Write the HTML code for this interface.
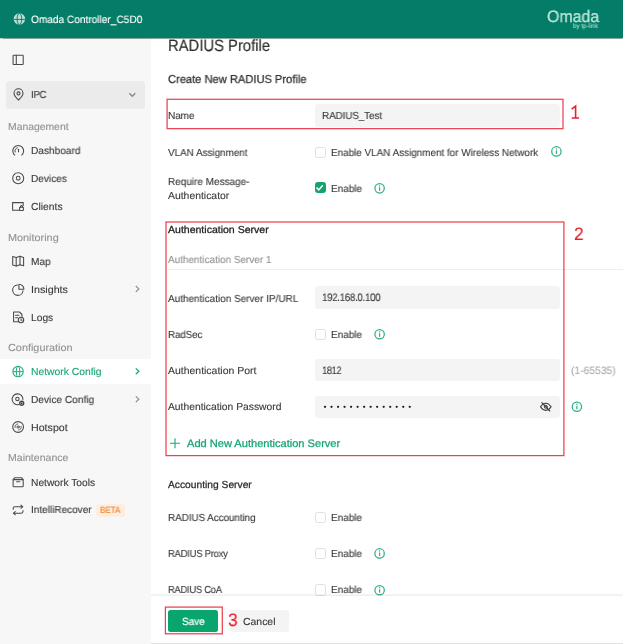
<!DOCTYPE html>
<html>
<head>
<meta charset="utf-8">
<title>RADIUS Profile</title>
<style>
*{box-sizing:border-box;margin:0;padding:0}
html,body{width:623px;height:644px;overflow:hidden;background:#fff}
body{font-family:"Liberation Sans",sans-serif;color:#333;position:relative;font-size:10.5px}
.abs{position:absolute}
.t{text-rendering:geometricPrecision;-webkit-text-stroke:0.12px currentColor;position:absolute;white-space:nowrap;line-height:14px;height:14px;transform-origin:0 50%;will-change:transform}
#hdr{position:absolute;left:0;top:0;width:623px;height:38px;background:#037d67;z-index:2;box-shadow:0 0.5px 1px rgba(0,60,45,.45)}
#side{position:absolute;left:0;top:38px;width:151px;height:606px;background:#f7f7f7}
.inp{position:absolute;left:314.7px;width:245px;height:22.6px;background:#f4f4f4;border-radius:3px}
.cb{position:absolute;left:314.500px;width:11.200px;height:11.200px;border:1px solid #e0e0e0;border-radius:2.5px;background:#fff}
svg{position:absolute;overflow:visible}
.ic{fill:none;stroke:#4a4a4a;stroke-width:1.07;stroke-linecap:round;stroke-linejoin:round}
.info{fill:none;stroke:#2db182;stroke-width:1.25}
</style>
</head>
<body>
<!-- header -->
<div id="hdr"></div>
<svg style="left:0;top:0;z-index:3" width="623" height="39" viewBox="0 0 623 39">
  <!-- globe -->
  <circle cx="19.400" cy="19" r="5.750" fill="#b7e0d3"/>
  <g fill="none" stroke="#037d67" stroke-width="0.900">
    <ellipse cx="19.400" cy="19" rx="2.300" ry="5.600"/>
    <path d="M13.600 19.450H25.200" stroke-width="0.900"/>
  </g>
</svg>
<!-- logo -->
<div class="t" style="z-index:3;left:546.600px;top:6.800px;color:#bfe4d8;font-size:16.600px;line-height:20px;height:20px;transform:scaleX(0.957);-webkit-text-stroke:0.300px #bfe4d8">Omada</div>
<div class="t" style="z-index:3;left:572.8px;top:22.6px;color:#a9dacb;font-size:6.4px;line-height:8px;height:8px;transform:scaleX(0.97)">by tp-link</div>

<!-- sidebar -->
<div id="side"></div>
<div class="abs" style="left:6.100px;top:80.900px;width:139.200px;height:27.700px;background:#ebebeb;border-radius:3.500px"></div>
<div class="abs" style="left:0;top:359px;width:151px;height:24.7px;background:#fff"></div>

<svg style="left:0;top:0" width="151" height="644" viewBox="0 0 151 644">
  <!-- toggle -->
  <g class="ic"><rect x="13.100" y="55.200" width="10.100" height="9.300" rx="0.600"/><path d="M16.300 55.200V64.500"/></g>
  <!-- pin -->
  <g class="ic"><path d="M18.5 100C15.6 97.3 14 95.2 14 93.3a4.5 4.5 0 0 1 9 0c0 1.900-1.600 4-4.500 6.700z"/><circle cx="18.500" cy="93.400" r="1.500"/></g>
  <!-- chevron down -->
  <path d="M129.300 93.300L132.300 96.300L135.300 93.300" fill="none" stroke="#858585" stroke-width="1.250"/>
  <!-- dashboard -->
  <g class="ic"><path d="M14.730 155.040A5.400 5.400 0 1 1 21.670 155.040"/><path d="M15.100 152.030A3.300 3.300 0 0 1 17.350 147.710" stroke-width="1"/><path d="M18.500 151.800V149.300" stroke-width="1.100"/></g>
  <!-- devices -->
  <g class="ic"><circle cx="18.200" cy="178.200" r="5.500"/><circle cx="18.200" cy="178.200" r="1.900"/></g>
  <!-- clients -->
  <g class="ic"><path d="M19.500 210.200H12.600V202.600H23.200V205.500"/><rect x="19.600" y="207.300" width="3.800" height="3.200" rx="0.400"/><path d="M20.500 207.300V206.600a1 1 0 0 1 2 0V207.300"/></g>
  <!-- map -->
  <g class="ic"><path d="M12.700 256.500L16.200 257.500L20 256.300L23.600 257.400V265.800L20 264.700L16.200 265.900L12.700 264.900Z"/><path d="M16.200 257.500V265.900M20 256.300V264.700"/></g>
  <!-- insights -->
  <g class="ic"><path d="M17.300 285A5.200 5.200 0 1 0 23 290.700"/><path d="M18.900 284.200V289.200H23.900A5 5 0 0 0 18.900 284.200Z"/></g>
  <!-- chevron right -->
  <path d="M135.800 286L138.800 288.900L135.800 291.800" fill="none" stroke="#8a8a8a" stroke-width="1.150"/>
  <!-- logs -->
  <g class="ic"><path d="M18 321.800H13.600V312H19.500L22 314.500V316.500"/><path d="M15.600 315.300H19M15.600 317.800H17.500"/><circle cx="21" cy="320" r="2.700"/><path d="M21 318.800V320.200H22"/></g>
  <!-- network config -->
  <g fill="none" stroke="#25ae7e" stroke-width="1.100"><circle cx="18.050" cy="371.600" r="5.200"/><ellipse cx="18.050" cy="371.600" rx="1.800" ry="5.200" stroke-width="1"/><path d="M12.900 371.600H23.200" stroke-width="1"/></g>
  <path d="M135.800 368.400L138.800 371.300L135.800 374.200" fill="none" stroke="#1aa877" stroke-width="1.300"/>
  <!-- device config -->
  <g class="ic"><path d="M18.800 404.500A5.400 5.400 0 1 1 22.900 399.600"/><circle cx="17.400" cy="399" r="1.700"/><circle cx="21.700" cy="403.300" r="2" stroke-width="1.400"/><circle cx="21.700" cy="403.300" r="0.500"/></g>
  <path d="M135.800 396.300L138.800 399.200L135.800 402.100" fill="none" stroke="#8a8a8a" stroke-width="1.150"/>
  <!-- hotspot -->
  <g class="ic"><circle cx="18.1" cy="427.0" r="5.400"/><circle cx="18.1" cy="427.0" r="1.150" stroke-width="0.950"/><path d="M15.05 427.54A3.100 3.100 0 0 1 17.56 423.95" stroke-width="0.900"/><path d="M21.15 426.46A3.100 3.100 0 0 1 18.64 430.05" stroke-width="0.900"/></g>
  <!-- network tools -->
  <g class="ic"><rect x="13.100" y="479.600" width="10.100" height="7.200" rx="0.800"/><path d="M13.100 479.600L14.800 477.700H21.500L23.200 479.600"/><path d="M16.600 481.800H19.700"/></g>
  <!-- intellirecover -->
  <g class="ic"><path d="M13.200 509.300V508.300A1.600 1.600 0 0 1 14.800 506.700H22.600"/><path d="M20.900 505.100L22.700 506.700L20.900 508.300"/><path d="M23 510.600V511.600A1.600 1.600 0 0 1 21.400 513.200H13.600"/><path d="M15.300 511.600L13.500 513.200L15.300 514.800"/></g>
</svg>
<div class="abs" style="left:96.300px;top:504.100px;width:28.500px;height:12.700px;background:#fdeee1;border-radius:2px"></div>

<!-- main: dividers / inputs / checkboxes -->
<div class="abs" style="left:167.500px;top:268.500px;width:456px;height:1px;background:#efefef"></div>

<div class="inp" style="top:104.200px"></div>
<div class="inp" style="top:286.400px"></div>
<div class="inp" style="top:358.900px"></div>
<div class="inp" style="top:395.500px"></div>

<div class="cb" style="top:146.600px"></div>
<div class="cb" style="top:182.300px;background:#14a36d;border-color:#14a36d"></div>
<svg style="left:314.400px;top:182.300px" width="11.200" height="11.200" viewBox="0 0 11.200 11.200"><path d="M2.500 5.600L4.700 7.900L8.800 3.300" fill="none" stroke="#fff" stroke-width="1.500"/></svg>
<div class="cb" style="top:328.700px"></div>
<div class="cb" style="top:511.700px"></div>
<div class="cb" style="top:547.700px"></div>
<div class="cb" style="top:584.400px"></div>

<!-- password dots, eye, infos, plus -->
<svg style="left:0;top:0" width="623" height="644" viewBox="0 0 623 644">
  <g fill="#222">
    <circle cx="325" cy="406.800" r="1.150"/><circle cx="331.520" cy="406.800" r="1.150"/><circle cx="338.040" cy="406.800" r="1.150"/><circle cx="344.560" cy="406.800" r="1.150"/><circle cx="351.080" cy="406.800" r="1.150"/><circle cx="357.600" cy="406.800" r="1.150"/><circle cx="364.120" cy="406.800" r="1.150"/><circle cx="370.640" cy="406.800" r="1.150"/><circle cx="377.160" cy="406.800" r="1.150"/><circle cx="383.680" cy="406.800" r="1.150"/><circle cx="390.200" cy="406.800" r="1.150"/><circle cx="396.720" cy="406.800" r="1.150"/><circle cx="403.240" cy="406.800" r="1.150"/><circle cx="409.760" cy="406.800" r="1.150"/>
  </g>
  <!-- eye-off -->
  <g fill="none" stroke="#3f3f3f" stroke-width="1.150" stroke-linecap="round">
    <path d="M540.500 406.800C542.100 404.300 543.800 403.200 545.800 403.200S549.500 404.300 551.100 406.800C549.500 409.300 547.800 410.400 545.800 410.400S542.100 409.300 540.500 406.800Z"/>
    <circle cx="545.800" cy="406.800" r="1.500" stroke-width="1"/>
    <path d="M541.900 402.600L549.800 411"/>
  </g>
  <!-- info icons -->
  <g><circle cx="556.4" cy="151.4" r="4.700" fill="none" stroke="#2db182" stroke-width="1.250"/><path d="M556.4 150.50V153.90" stroke="#2db182" stroke-width="1.250" fill="none"/><circle cx="556.4" cy="149.00" r="0.720" fill="#2db182"/></g>
  <g><circle cx="379.6" cy="188.3" r="4.700" fill="none" stroke="#2db182" stroke-width="1.250"/><path d="M379.6 187.40V190.80" stroke="#2db182" stroke-width="1.250" fill="none"/><circle cx="379.6" cy="185.90" r="0.720" fill="#2db182"/></g>
  <g><circle cx="379.6" cy="334.3" r="4.700" fill="none" stroke="#2db182" stroke-width="1.250"/><path d="M379.6 333.40V336.80" stroke="#2db182" stroke-width="1.250" fill="none"/><circle cx="379.6" cy="331.90" r="0.720" fill="#2db182"/></g>
  <g><circle cx="576.9" cy="406.7" r="4.700" fill="none" stroke="#2db182" stroke-width="1.250"/><path d="M576.9 405.80V409.20" stroke="#2db182" stroke-width="1.250" fill="none"/><circle cx="576.9" cy="404.30" r="0.720" fill="#2db182"/></g>
  <g><circle cx="379.6" cy="553.4" r="4.700" fill="none" stroke="#2db182" stroke-width="1.250"/><path d="M379.6 552.50V555.90" stroke="#2db182" stroke-width="1.250" fill="none"/><circle cx="379.6" cy="551.00" r="0.720" fill="#2db182"/></g>
  <g><circle cx="379.6" cy="590.2" r="4.700" fill="none" stroke="#2db182" stroke-width="1.250"/><path d="M379.6 589.30V592.70" stroke="#2db182" stroke-width="1.250" fill="none"/><circle cx="379.6" cy="587.80" r="0.720" fill="#2db182"/></g>
  <!-- plus -->
  <path d="M175 438.200V448.200M170 443.200H180" stroke="#1aa877" stroke-width="1.100" fill="none"/>
</svg>

<!-- footer -->
<div class="abs" style="left:151px;top:592.600px;width:472px;height:3px;background:linear-gradient(rgba(0,0,0,0),rgba(0,0,0,0.075))"></div>
<div class="abs" style="left:151px;top:595.600px;width:472px;height:48.400px;background:#fff"></div>
<div class="abs" style="left:151px;top:642.800px;width:472px;height:1.200px;background:#e2e2e2"></div>
<div class="abs" style="left:168.100px;top:609.500px;width:50px;height:22px;background:#08a56c;border-radius:2.500px"></div>
<div class="abs" style="left:229.800px;top:609.500px;width:59.600px;height:22px;background:#f4f4f4;border-radius:2.500px"></div>

<!-- red annotation boxes + numbers -->
<svg style="left:0;top:0" width="623" height="644" viewBox="0 0 623 644">
  <g fill="none" stroke="#ee414e" stroke-width="1.250">
    <rect x="167.100" y="99.300" width="395.900" height="29.350"/>
    <rect x="166" y="222" width="397.900" height="233.600"/>
    <rect x="165.400" y="607.100" width="56.900" height="26.700"/>
  </g>
  <!-- "1" with base -->
  <path d="M571.600 109.200L575.600 106.200V118H571.800M575.600 118H579" fill="none" stroke="#e8202c" stroke-width="1.600"/>
</svg>
<div class="t" style="left:573.700px;top:223.500px;color:#e8202c;font-size:18px;line-height:20px;height:20px;transform:scaleX(0.960)">2</div>
<div class="t" style="left:228px;top:609.600px;color:#e8202c;font-size:18px;line-height:20px;height:20px;transform:scaleX(0.960)">3</div>

<div class="t" style="left:31.02px;top:13.00px;font-size:10.5px;color:#ffffff;transform:scaleX(0.9630);z-index:3;">Omada Controller_C5D0</div>
<div class="t" style="left:30.58px;top:89.40px;font-size:10.2px;color:#3a3a3a;transform:scaleX(0.9600);letter-spacing:-0.4px;">IPC</div>
<div class="t" style="left:8.24px;top:120.80px;font-size:10.2px;color:#929292;transform:scaleX(1.0179);">Management</div>
<div class="t" style="left:30.76px;top:145.40px;font-size:10.2px;color:#3a3a3a;transform:scaleX(0.9918);">Dashboard</div>
<div class="t" style="left:30.76px;top:173.20px;font-size:10.2px;color:#3a3a3a;transform:scaleX(0.9872);">Devices</div>
<div class="t" style="left:30.99px;top:200.90px;font-size:10.2px;color:#3a3a3a;transform:scaleX(1.0131);">Clients</div>
<div class="t" style="left:8.20px;top:231.50px;font-size:10.2px;color:#929292;transform:scaleX(1.0659);">Monitoring</div>
<div class="t" style="left:30.76px;top:255.90px;font-size:10.2px;color:#3a3a3a;transform:scaleX(0.9867);">Map</div>
<div class="t" style="left:30.71px;top:283.70px;font-size:10.2px;color:#3a3a3a;transform:scaleX(1.0529);">Insights</div>
<div class="t" style="left:30.75px;top:311.70px;font-size:10.2px;color:#3a3a3a;transform:scaleX(1.0048);">Logs</div>
<div class="t" style="left:8.47px;top:342.00px;font-size:10.2px;color:#929292;transform:scaleX(1.0655);">Configuration</div>
<div class="t" style="left:30.74px;top:365.90px;font-size:10.2px;color:#17a673;transform:scaleX(1.0139);">Network Config</div>
<div class="t" style="left:30.75px;top:393.70px;font-size:10.2px;color:#3a3a3a;transform:scaleX(0.9952);">Device Config</div>
<div class="t" style="left:30.72px;top:422.20px;font-size:10.2px;color:#3a3a3a;transform:scaleX(1.0453);">Hotspot</div>
<div class="t" style="left:8.22px;top:452.30px;font-size:10.2px;color:#929292;transform:scaleX(1.0358);">Maintenance</div>
<div class="t" style="left:30.75px;top:476.70px;font-size:10.2px;color:#3a3a3a;transform:scaleX(1.0040);">Network Tools</div>
<div class="t" style="left:30.76px;top:504.40px;font-size:10.2px;color:#3a3a3a;transform:scaleX(0.9820);">IntelliRecover</div>
<div class="t" style="left:100.01px;top:503.20px;font-size:9.0px;color:#f28c38;transform:scaleX(0.9176);-webkit-text-stroke:0.2px #f28c38;letter-spacing:-0.2px;">BETA</div>
<div class="t" style="left:167.86px;top:38.90px;font-size:16.3px;color:#303030;transform:scaleX(0.9088);-webkit-text-stroke:0.2px #303030;">RADIUS Profile</div>
<div class="t" style="left:167.82px;top:73.25px;font-size:11.5px;color:#303030;transform:scaleX(0.9673);-webkit-text-stroke:0.25px #303030;">Create New RADIUS Profile</div>
<div class="t" style="left:167.76px;top:109.60px;font-size:10.2px;color:#3a3a3a;transform:scaleX(0.9922);letter-spacing:-0.2px;">Name</div>
<div class="t" style="left:168.00px;top:146.75px;font-size:10.2px;color:#3a3a3a;transform:scaleX(0.9683);">VLAN Assignment</div>
<div class="t" style="left:167.97px;top:176.00px;font-size:10.2px;color:#3a3a3a;transform:scaleX(0.9793);">Require Message-</div>
<div class="t" style="left:168.00px;top:189.75px;font-size:10.2px;color:#3a3a3a;transform:scaleX(1.0208);">Authenticator</div>
<div class="t" style="left:168.00px;top:224.40px;font-size:10.2px;color:#222222;transform:scaleX(1.0333);-webkit-text-stroke:0.28px #222;">Authentication Server</div>
<div class="t" style="left:168.00px;top:254.00px;font-size:10.2px;color:#929292;transform:scaleX(0.9763);">Authentication Server 1</div>
<div class="t" style="left:168.00px;top:292.60px;font-size:10.2px;color:#3a3a3a;transform:scaleX(0.9793);">Authentication Server IP/URL</div>
<div class="t" style="left:168.08px;top:328.70px;font-size:10.2px;color:#3a3a3a;transform:scaleX(0.9652);letter-spacing:-0.15px;">RadSec</div>
<div class="t" style="left:168.00px;top:365.00px;font-size:10.2px;color:#3a3a3a;transform:scaleX(1.0262);">Authentication Port</div>
<div class="t" style="left:168.00px;top:401.00px;font-size:10.2px;color:#3a3a3a;transform:scaleX(1.0112);">Authentication Password</div>
<div class="t" style="left:186.75px;top:437.00px;font-size:10.8px;color:#17a673;transform:scaleX(1.0251);-webkit-text-stroke:0.28px #17a673;">Add New Authentication Server</div>
<div class="t" style="left:168.00px;top:478.75px;font-size:10.2px;color:#2a2a2a;transform:scaleX(1.0060);-webkit-text-stroke:0.25px #2a2a2a;">Accounting Server</div>
<div class="t" style="left:167.97px;top:512.00px;font-size:10.2px;color:#3a3a3a;transform:scaleX(0.9779);letter-spacing:-0.1px;">RADIUS Accounting</div>
<div class="t" style="left:168.00px;top:548.00px;font-size:10.2px;color:#3a3a3a;transform:scaleX(0.9339);letter-spacing:-0.3px;">RADIUS Proxy</div>
<div class="t" style="left:168.01px;top:584.25px;font-size:10.2px;color:#3a3a3a;transform:scaleX(0.9229);letter-spacing:-0.3px;">RADIUS CoA</div>
<div class="t" style="left:322.27px;top:110.25px;font-size:10.2px;color:#3a3a3a;transform:scaleX(0.9793);letter-spacing:-0.15px;">RADIUS_Test</div>
<div class="t" style="left:331.02px;top:146.50px;font-size:10.2px;color:#3a3a3a;transform:scaleX(0.9706);">Enable VLAN Assignment for Wireless Network</div>
<div class="t" style="left:330.87px;top:183.00px;font-size:10.2px;color:#3a3a3a;transform:scaleX(0.9789);">Enable</div>
<div class="t" style="left:322.33px;top:291.40px;font-size:10.9px;color:#3a3a3a;transform:scaleX(0.8949);letter-spacing:-0.35px;">192.168.0.100</div>
<div class="t" style="left:330.87px;top:329.00px;font-size:10.2px;color:#3a3a3a;transform:scaleX(0.9789);">Enable</div>
<div class="t" style="left:322.35px;top:364.20px;font-size:10.9px;color:#3a3a3a;transform:scaleX(0.8706);letter-spacing:-0.55px;">1812</div>
<div class="t" style="left:570.72px;top:364.30px;font-size:10.7px;color:#ababab;transform:scaleX(0.9635);">(1-65535)</div>
<div class="t" style="left:330.87px;top:512.00px;font-size:10.2px;color:#3a3a3a;transform:scaleX(0.9789);">Enable</div>
<div class="t" style="left:330.87px;top:548.00px;font-size:10.2px;color:#3a3a3a;transform:scaleX(0.9789);">Enable</div>
<div class="t" style="left:330.87px;top:584.25px;font-size:10.2px;color:#3a3a3a;transform:scaleX(0.9789);">Enable</div>
<div class="t" style="left:181.78px;top:614.50px;font-size:10.5px;color:#ffffff;transform:scaleX(0.9556);-webkit-text-stroke:0.2px #fff;">Save</div>
<div class="t" style="left:243.24px;top:615.50px;font-size:10.2px;color:#3a3a3a;transform:scaleX(1.0246);">Cancel</div>
</body>
</html>
